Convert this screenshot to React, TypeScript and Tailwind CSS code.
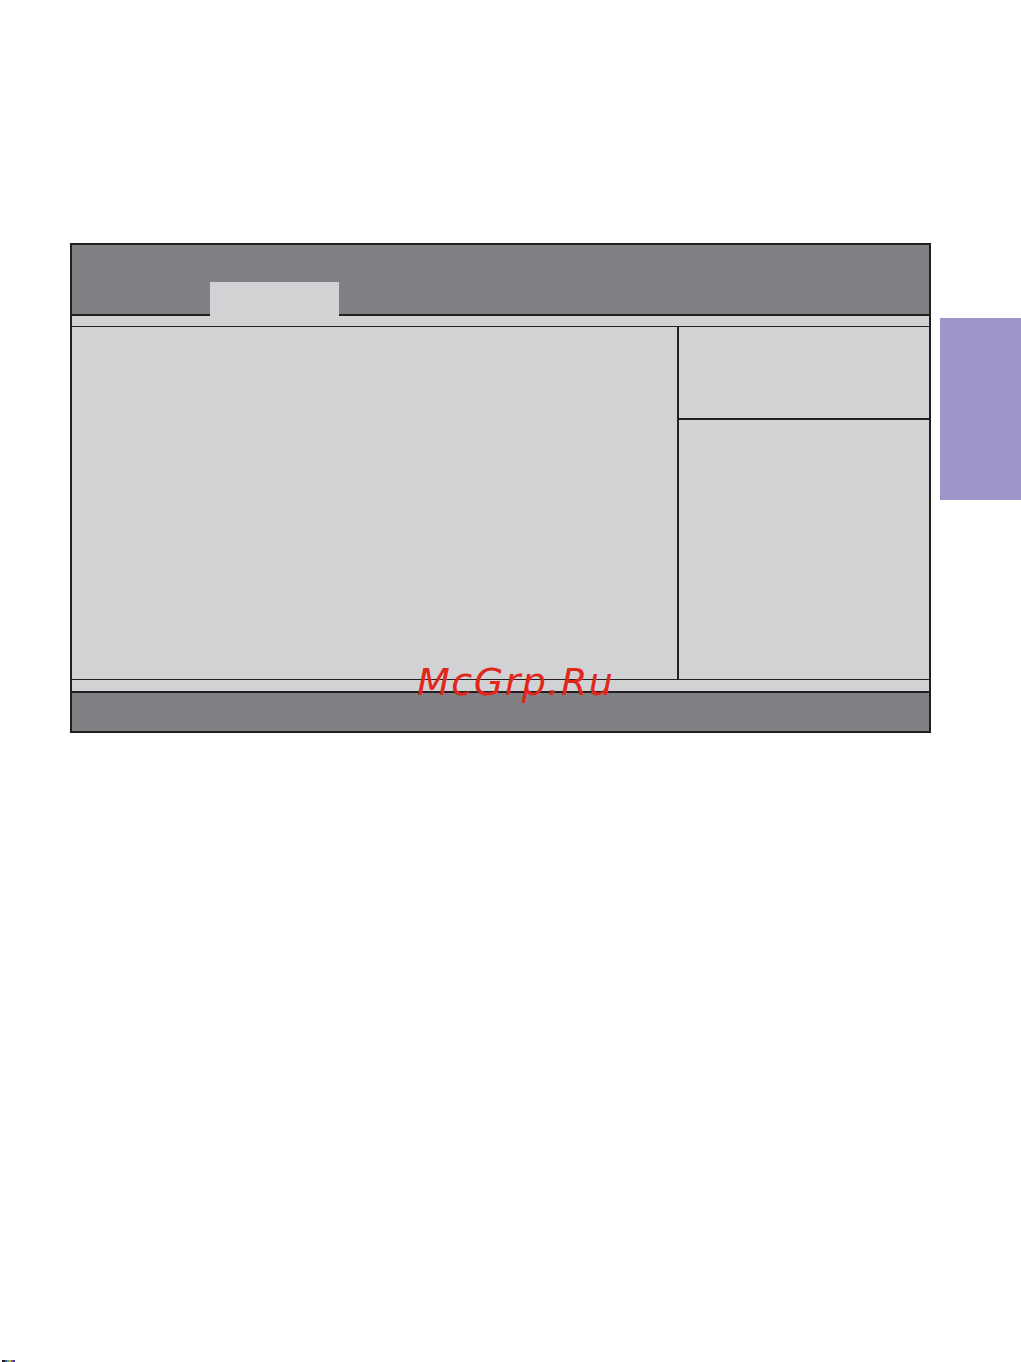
export default function App() {
  return (
    <div className="relative w-[1021px] h-[1362px] bg-white overflow-hidden">
      <div className="flex items-start pt-[243px] pl-[70px]">
        {/* BIOS frame */}
        <div className="w-[861px] h-[490px] border-2 border-[#231f20] flex flex-col bg-[#d1d2d4]">
          {/* header */}
          <div className="h-[71px] flex bg-[#808184]">
            <div className="w-[138px] border-b-2 border-[#231f20]" />
            <div className="w-[129px] h-[34px] self-end bg-[#d1d2d4]" />
            <div className="flex-1 border-b-2 border-[#231f20]" />
          </div>
          <div className="h-[10px] bg-[#d1d2d4]" />
          <div className="h-px bg-[#231f20]" />
          {/* main */}
          <div className="h-[352px] flex">
            <div className="w-[605px] bg-[#d1d2d4]" />
            <div className="w-[2px] bg-[#231f20]" />
            <div className="flex-1 flex flex-col">
              <div className="h-[91px] bg-[#d1d2d4]" />
              <div className="h-[1.5px] bg-[#231f20]" />
              <div className="flex-1 bg-[#d1d2d4]" />
            </div>
          </div>
          <div className="h-px bg-[#231f20]" />
          <div className="h-[11px] bg-[#d1d2d4]" />
          <div className="h-[2px] bg-[#231f20]" />
          <div className="flex-1 bg-[#808184]" />
        </div>
        {/* side thumb tab */}
        <div className="ml-[9px] mt-[75px] w-[81px] h-[182px] bg-[#9d97c9]" />
      </div>

      {/* watermark */}
      <div
        className="absolute left-[417px] top-[663px] text-[38px] leading-none italic tracking-[1.5px] text-[#e1261c] whitespace-nowrap"
        style={{ fontFamily: '"DejaVu Sans", sans-serif' }}
      >
        McGrp.Ru
      </div>

      {/* tiny colour strip bottom-left */}
      <div className="absolute left-[2px] top-[1360px] flex h-[2px]">
        <div className="w-[3px] bg-[#231f20]" />
        <div className="w-[2px] bg-[#3a5bd0]" />
        <div className="w-[2px] bg-[#6fb04a]" />
        <div className="w-[2px] bg-[#c9b53a]" />
        <div className="w-[2px] bg-[#9a4bb8]" />
        <div className="w-[2px] bg-[#2b3fa8]" />
      </div>
    </div>
  );
}
